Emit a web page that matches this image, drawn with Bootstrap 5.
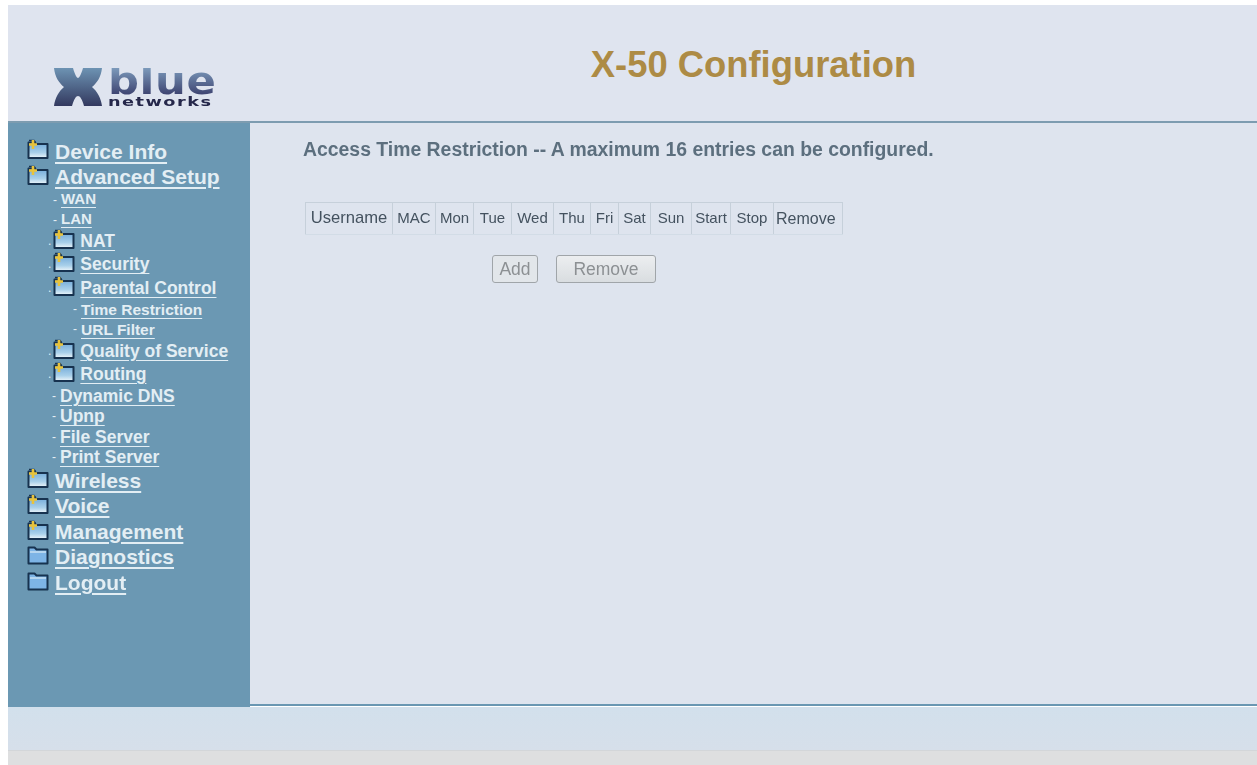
<!DOCTYPE html>
<html lang="en">
<head>
<meta charset="utf-8">
<title>X-50 Configuration</title>
<link href="https://cdn.jsdelivr.net/npm/bootstrap@5.3.0/dist/css/bootstrap.min.css" rel="stylesheet">
<style>
html,body{height:765px;overflow:hidden;background:#fff;font-family:"Liberation Sans",Arial,sans-serif}
.shell{height:765px;padding:5px 0 0 8px;filter:blur(.6px)}
.head-bar{height:118px;background:#dfe4ef;border-bottom:2px solid #7d9cb0}
.logo-area{width:242px;padding:63px 0 0 46px;flex:none}
.logo-wrap{width:165px;height:40px;position:relative}
.logo-blue{position:absolute;left:54px;top:0;height:28px;font:700 37px/28px "DejaVu Sans",sans-serif;letter-spacing:.5px;color:transparent;background:linear-gradient(#7c9abb,#3a3f6d);-webkit-background-clip:text;background-clip:text;transform:scaleX(1.17);transform-origin:left top}
.logo-net{position:absolute;left:54px;top:28px;font:700 13px/11px "DejaVu Sans",sans-serif;letter-spacing:1.1px;color:#25274a;transform:scaleX(1.36);transform-origin:left top}
.page-title{font-size:36.4px;font-weight:700;color:#ad8b45;padding:38px 0 0 0}
.mid-zone{height:584px}
.side-nav{width:242px;background:#6b98b3;padding-top:15.5px;flex:none}
.nav-row{display:flex;align-items:center;white-space:nowrap;color:#e4eef4;font-size:12px}
.nav-row a{color:#e3eef4;font-weight:700;text-decoration:underline;text-underline-offset:3px}
.tier1{height:25.6px;padding-left:19px;gap:6px}
.tier1 a{font-size:21px}
.tier2{height:23.2px;padding-left:40px;gap:2px}
.tier2 a{font-size:17.5px;margin-left:3px}
.tier3{height:20px;gap:4px}
.tier3 a{font-size:15px}
.base-leaf{padding-left:45px}
.deep-leaf{padding-left:65px}
.deep-leaf a{font-size:15.5px}
.wide-leaf{height:20.5px;padding-left:44px}
.wide-leaf a{font-size:17.5px}
.fold{width:22px;height:20px;flex:none;margin-top:-4px}
.main-pane{background:#dee4ee;flex:1;padding:16px 0 0 53px;border-bottom:2px solid #6a97b2;height:583px}
.main-head{font-size:19.4px;font-weight:700;color:#5c6f7e;line-height:20px;margin:0}
.rule-table{margin:43px 0 0 2px;border-collapse:collapse;table-layout:fixed;width:538px;height:33px;color:#44525f;font-size:15px}
.rule-table td{border:1px solid #c6d0da;padding:0;text-align:center;border-bottom-color:#d2dce6;white-space:nowrap}
.rule-table .cell-wide{font-size:16.6px}
.rule-table .cell-mid{font-size:16px;text-align:left;padding-left:2px}
.w-a{width:87px}.w-b{width:43px}.w-c{width:38px}.w-d{width:42px}.w-e{width:37px}.w-f{width:28px}.w-g{width:32px}.w-h{width:41px}.w-i{width:39px}.w-j{width:43px}.w-k{width:69px}
.act-row{padding:20px 0 0 189px;gap:18px}
.act-btn{height:28px;padding:0;font-size:17.5px;color:#8c9093;background:linear-gradient(#eceef0,#d9dde0);border:1px solid #a0a5a9;border-radius:3px;line-height:26px}
.act-add{width:46px;background:#e2e6ea}.act-del{width:100px}
.foot-bar{height:43px;background:linear-gradient(#d2e0ec,#d6dfea)}
.foot-end{height:15px;background:#dedfe0;border-top:1px solid #d3d6d9}
</style>
</head>
<body>
<svg width="0" height="0" class="d-block">
<defs>
<linearGradient id="fg" x1="0" y1="0" x2="0" y2="1"><stop offset="0" stop-color="#6fa8d8"/><stop offset=".65" stop-color="#a9d0ea"/><stop offset="1" stop-color="#eef6fa"/></linearGradient>
<linearGradient id="xg" x1="0" y1="0" x2="0" y2="1"><stop offset="0" stop-color="#6d93b3"/><stop offset="1" stop-color="#33395f"/></linearGradient>
<symbol id="fplus" viewBox="0 0 22 20"><path d="M1.500 3.500h6l2 1.500h11v14H1.500z" fill="url(#fg)" stroke="#17324f" stroke-width="2" stroke-linejoin="round"/><path d="M2 1.500h5l1.500 2" fill="none" stroke="#17324f" stroke-width="1.500"/><path d="M6 1v9M2 5.500h8" stroke="#e8c33c" stroke-width="2.600"/></symbol>
<symbol id="fplain" viewBox="0 0 22 20"><path d="M1.500 2.500h6l2 2h11v14H1.500z" fill="#7db4e6" stroke="#17324f" stroke-width="2" stroke-linejoin="round"/><path d="M3 7h16" stroke="#c8e0f2" stroke-width="1.500"/></symbol>
</defs>
</svg>
<div class="shell d-flex flex-column">
<header class="head-bar d-flex">
<div class="logo-area">
<div class="logo-wrap">
<svg width="48" height="38" viewBox="0 0 48 38"><path d="M0 0H19C21 7 23 10 24 10S27 7 29 0H48C47 9 43 15 38 19C43 23 47 30 48 38H30C28 31 26 28 24 28S20 31 18 38H0C1 30 5 23 10 19C5 15 1 9 0 0Z" fill="url(#xg)"/></svg>
<span class="logo-blue">blue</span>
<span class="logo-net">networks</span>
</div>
</div>
<h1 class="page-title mb-0 flex-grow-1 text-center">X-50 Configuration</h1>
</header>
<div class="mid-zone d-flex">
<nav class="side-nav">
<div class="nav-row tier1"><svg class="fold"><use href="#fplus"/></svg><a href="#">Device Info</a></div>
<div class="nav-row tier1"><svg class="fold"><use href="#fplus"/></svg><a href="#">Advanced Setup</a></div>
<div class="nav-row tier3 base-leaf">- <a href="#">WAN</a></div>
<div class="nav-row tier3 base-leaf">- <a href="#">LAN</a></div>
<div class="nav-row tier2">.<svg class="fold"><use href="#fplus"/></svg><a href="#">NAT</a></div>
<div class="nav-row tier2">.<svg class="fold"><use href="#fplus"/></svg><a href="#">Security</a></div>
<div class="nav-row tier2">.<svg class="fold"><use href="#fplus"/></svg><a href="#">Parental Control</a></div>
<div class="nav-row tier3 deep-leaf">- <a href="#">Time Restriction</a></div>
<div class="nav-row tier3 deep-leaf">- <a href="#">URL Filter</a></div>
<div class="nav-row tier2">.<svg class="fold"><use href="#fplus"/></svg><a href="#">Quality of Service</a></div>
<div class="nav-row tier2">.<svg class="fold"><use href="#fplus"/></svg><a href="#">Routing</a></div>
<div class="nav-row tier3 wide-leaf">- <a href="#">Dynamic DNS</a></div>
<div class="nav-row tier3 wide-leaf">- <a href="#">Upnp</a></div>
<div class="nav-row tier3 wide-leaf">- <a href="#">File Server</a></div>
<div class="nav-row tier3 wide-leaf">- <a href="#">Print Server</a></div>
<div class="nav-row tier1"><svg class="fold"><use href="#fplus"/></svg><a href="#">Wireless</a></div>
<div class="nav-row tier1"><svg class="fold"><use href="#fplus"/></svg><a href="#">Voice</a></div>
<div class="nav-row tier1"><svg class="fold"><use href="#fplus"/></svg><a href="#">Management</a></div>
<div class="nav-row tier1"><svg class="fold"><use href="#fplain"/></svg><a href="#">Diagnostics</a></div>
<div class="nav-row tier1"><svg class="fold"><use href="#fplain"/></svg><a href="#">Logout</a></div>
</nav>
<main class="main-pane">
<p class="main-head">Access Time Restriction -- A maximum 16 entries can be configured.</p>
<table class="rule-table">
<colgroup><col class="w-a"><col class="w-b"><col class="w-c"><col class="w-c"><col class="w-d"><col class="w-e"><col class="w-f"><col class="w-g"><col class="w-h"><col class="w-i"><col class="w-j"><col class="w-k"></colgroup>
<tr><td class="cell-wide">Username</td><td>MAC</td><td>Mon</td><td>Tue</td><td>Wed</td><td>Thu</td><td>Fri</td><td>Sat</td><td>Sun</td><td>Start</td><td>Stop</td><td class="cell-mid">Remove</td></tr>
</table>
<div class="act-row d-flex">
<button type="button" class="btn act-btn act-add">Add</button>
<button type="button" class="btn act-btn act-del">Remove</button>
</div>
</main>
</div>
<div class="foot-bar"></div>
<div class="foot-end"></div>
</div>
<script src="https://cdn.jsdelivr.net/npm/bootstrap@5.3.0/dist/js/bootstrap.bundle.min.js"></script>
</body>
</html>
